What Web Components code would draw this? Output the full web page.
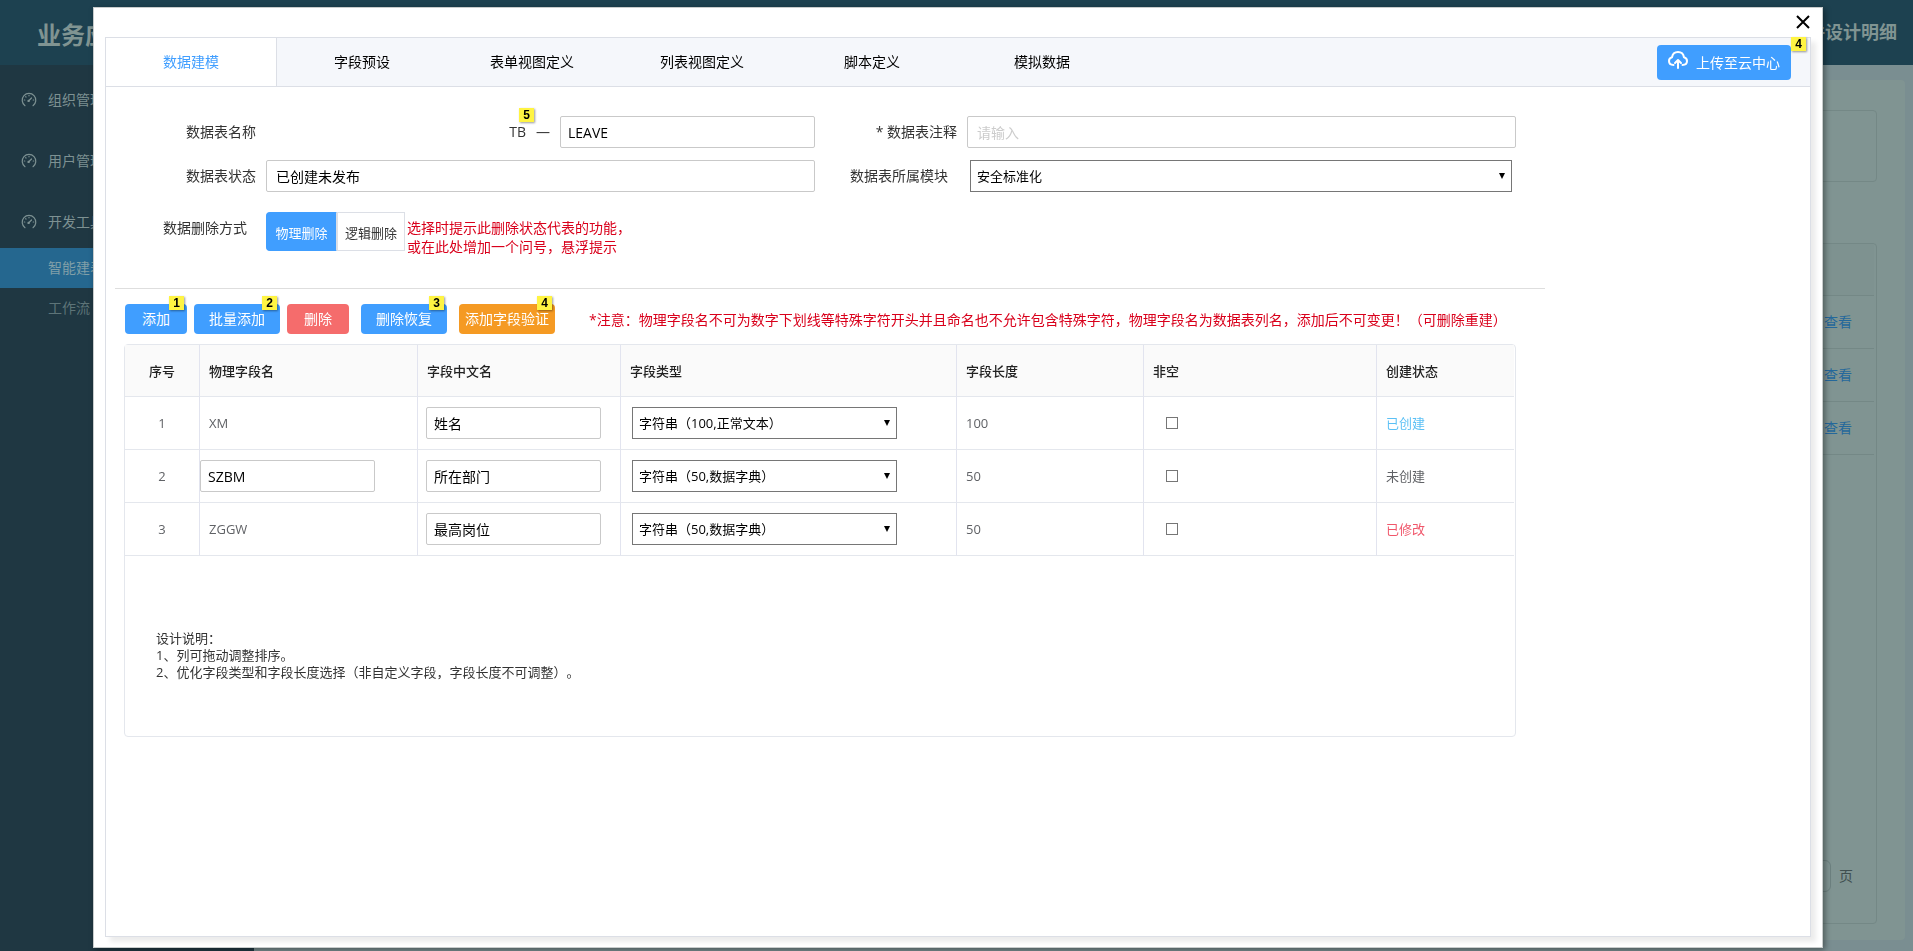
<!DOCTYPE html>
<html lang="zh-CN">
<head>
<meta charset="utf-8">
<title>数据建模</title>
<style>
  body {
    margin: 0;
    font-family: "Open Sans", "Noto Sans CJK SC", sans-serif;
    font-size: 14px;
    line-height: 20px;
    color: #333;
    --blue: #409eff;
    --line: #dcdfe6;
    --grid: #e4e7ed;
    --danger: #d9001b;
  }
</style>
</head>
<body>
<app-shell>
  <side-menu slot="side"></side-menu>
  <detail-page></detail-page>
</app-shell>

<modal-window>
  <tab-bar slot="head" tabs="数据建模,字段预设,表单视图定义,列表视图定义,脚本定义,模拟数据">
    <ui-button kind="upload" mark="4">上传至云中心</ui-button>
  </tab-bar>
  <model-form></model-form>
  <tool-bar>
    <ui-button mark="1">添加</ui-button>
    <ui-button mark="2">批量添加</ui-button>
    <ui-button kind="danger">删除</ui-button>
    <ui-button slot="extra" mark="3">删除恢复</ui-button>
    <ui-button slot="extra" kind="warn" mark="4">添加字段验证</ui-button>
    <span slot="note">*注意：物理字段名不可为数字下划线等特殊字符开头并且命名也不允许包含特殊字符，物理字段名为数据表列名，添加后不可变更！（可删除重建）</span>
  </tool-bar>
  <field-table>
    <div>设计说明：</div>
    <div>1、列可拖动调整排序。</div>
    <div>2、优化字段类型和字段长度选择（非自定义字段，字段长度不可调整）。</div>
  </field-table>
</modal-window>

<script>
const define = (name, html) => {
  customElements.define(name, class extends HTMLElement {
    constructor() {
      super();
      const t = document.createElement('template');
      t.innerHTML = typeof html === 'function' ? html(this) : html;
      this.attachShadow({ mode: 'open' }).append(t.content.cloneNode(true));
    }
  });
};

/* Shared look of text boxes and drop-downs */
const controls = `
  *, *::before, *::after { box-sizing: border-box; }
  input.text {
    height: 32px; min-width: 0; padding: 0 8px; margin: 0;
    border: 1px solid #c9c9c9; border-radius: 2px; background: #fff;
    font: inherit; font-size: 14px; color: #000; outline: none;
  }
  input.text::placeholder { color: #ccc; opacity: 1; }
  .pick { position: relative; display: inline-block; height: 32px; vertical-align: middle; }
  .pick::after {
    content: ""; position: absolute; right: 7px; top: 13px; width: 6px; height: 6px;
    background: #000; clip-path: polygon(0 0, 100% 0, 50% 100%); pointer-events: none;
  }
  select {
    appearance: none; display: block; width: 100%; height: 32px; margin: 0; padding: 0 6px;
    border: 1px solid #767676; border-radius: 0; background: #fff;
    font: inherit; font-size: 13px; color: #000;
  }`;

/* Small yellow number note pinned to a control */
define('note-mark', `
  <style>
    :host {
      position: absolute; top: -8px; right: 3px; width: 15px; height: 14px;
      background: #fff443; box-shadow: 1px 1px 2px rgba(0,0,0,.4);
      font: bold 12px/14px "Liberation Sans", sans-serif; color: #000; text-align: center;
    }
  </style><slot></slot>`);

define('ui-button', host => `
  <style>
    :host { position: relative; display: block; flex: none; }
    button {
      display: flex; align-items: center; justify-content: center;
      box-sizing: border-box; min-width: 62px; height: 30px; padding: 0 15px; border: 0; border-radius: 4px;
      background: var(--blue); color: #fff; font: inherit; font-size: 14px; white-space: nowrap;
    }
    svg { display: none; }
    :host([kind=danger]) button { background: #f56c6c; }
    :host([kind=warn]) button { background: #f59a23; padding: 0 6px; }
    :host([kind=upload]) button { height: 35px; padding: 2px 11px 0; gap: 8px; }
    :host([kind=upload]) svg { display: block; margin-top: -6px; }
    :host([kind=upload]) note-mark { right: -15px; }
  </style>
  <button type="button">
    <svg width="20" height="18" viewBox="0 0 20 18" fill="none" stroke="#fff" stroke-width="2" stroke-linecap="round" stroke-linejoin="round" aria-hidden="true">
      <path d="M5.5 14C2.800 14 1 12.300 1 10.100C1 8.100 2.300 6.700 4 6.300C4.500 3.200 6.900 1 10 1C13.100 1 15.500 3.200 16 6.300C17.700 6.700 19 8.100 19 10.100C19 12.300 17.200 14 14.500 14"/>
      <path d="M10 17V9.500M7 12L10 9L13 12"/>
    </svg>
    <span><slot></slot></span>
  </button>
  ${host.getAttribute('mark') ? `<note-mark>${host.getAttribute('mark')}</note-mark>` : ''}`);

/* Darkened application behind the window */
define('app-shell', `
  <style>
    :host {
      display: grid; min-height: 100vh;
      grid-template: 65px 1fr / 254px 1fr;
      grid-template-areas: "top top" "side main";
      background: #7a8e91; color: #809492;
    }
    header {
      grid-area: top; display: flex; justify-content: space-between; align-items: center;
      padding: 0 16px 0 37px; background: #1d4150;
    }
    .brand { font-size: 24px; font-weight: 700; line-height: 32px; padding-top: 4px; }
    .title { font-size: 18px; font-weight: 700; line-height: 24px; padding-bottom: 2px; }
    aside { grid-area: side; background: #1f3742; }
    main { grid-area: main; display: flex; padding: 15px 8px 11px 15px; }
  </style>
  <header><span class="brand">业务应用</span><span class="title">件设计明细</span></header>
  <aside><slot name="side"></slot></aside>
  <main><slot></slot></main>`);

const gauge = `<svg width="16" height="16" viewBox="0 0 16 16" fill="none" stroke="currentColor" stroke-width="1.200" stroke-linecap="round" aria-hidden="true">
  <path d="M4 13.700A6.800 6.800 0 1 1 12 13.700"/><path d="M7.500 9L10.500 6"/><circle cx="7.600" cy="8.900" r=".6"/>
  <path d="M8 3.300V3.800M3.300 8H3.800M12.200 8H12.700M4.700 4.700L5 5"/></svg>`;

define('side-menu', `
  <style>
    :host { display: block; padding-top: 9px; }
    a { display: flex; align-items: center; color: #7d9192; text-decoration: none; }
    .top { height: 52px; padding-left: 21px; gap: 11px; }
    .top + .top { margin-top: 9px; }
    .sub { height: 40px; padding-left: 48px; color: #5d7478; }
    .on { background: #25678f; color: #809fa8; }
  </style>
  <nav>
    <a class="top" href="#org">${gauge}组织管理</a>
    <a class="top" href="#user">${gauge}用户管理</a>
    <a class="top" href="#dev">${gauge}开发工具</a>
    <a class="sub on" href="#build">智能建表</a>
    <a class="sub" href="#flow">工作流</a>
  </nav>`);

define('detail-page', `
  <style>
    *, *::before { box-sizing: border-box; }
    :host {
      box-sizing: border-box; flex: 1; display: flex; flex-direction: column; gap: 61px;
      padding: 30px 28px 16px; border-radius: 4px; background: #809492;
    }
    .box { border: 1px solid #748886; border-radius: 4px; }
    .filter { height: 72px; }
    .list { flex: 1; display: flex; flex-direction: column; justify-content: space-between; padding-right: 2px; }
    table { width: 100%; border-collapse: separate; border-spacing: 0; }
    th { height: 52px; padding: 0; border-bottom: 1px solid #748886; background: #7e9290; }
    td { height: 53px; padding: 0 22px 0 0; border-bottom: 1px solid #748886; text-align: right; }
    a { color: #25689b; text-decoration: none; }
    .pager { display: flex; justify-content: flex-end; align-items: center; gap: 8px; padding: 0 21px 31px; color: #3f4f50; }
    input { width: 48px; height: 32px; border: 1px solid #6d8180; border-radius: 6px; background: none; }
  </style>
  <div class="box filter"></div>
  <div class="box list">
    <table>
      <thead><tr><th></th></tr></thead>
      <tbody>
        <tr><td><a href="#1">查看</a></td></tr>
        <tr><td><a href="#2">查看</a></td></tr>
        <tr><td><a href="#3">查看</a></td></tr>
      </tbody>
    </table>
    <div class="pager"><input aria-label="页码"><span>页</span></div>
  </div>`);

define('modal-window', `
  <style>
    *, *::before { box-sizing: border-box; }
    .window {
      position: fixed; inset: 7px 90px 3px 93px; display: flex; flex-direction: column;
      padding: 0 11px 10px; background: #fff; border: 1px solid #c8cccc;
      box-shadow: 2px 2px 6px rgba(0,0,0,.4);
    }
    .bar { display: flex; justify-content: flex-end; height: 29px; flex: none; }
    .close { width: 16px; height: 27px; padding: 0; border: 0; background: none; }
    .close svg { display: block; margin: auto; }
    .panel {
      flex: 1; border: 1px solid var(--line); background: #fff;
      box-shadow: 5px 5px 5px rgba(0,0,0,.08); min-height: 0;
    }
    .body { padding: 29px 9px 0; }
  </style>
  <section class="window" role="dialog" aria-label="数据建模">
    <div class="bar"><button class="close" type="button" aria-label="关闭">
      <svg width="14" height="14" viewBox="0 0 14 14" stroke="#000" stroke-width="2" aria-hidden="true"><path d="M1 1L13 13M13 1L1 13"/></svg>
    </button></div>
    <div class="panel">
      <slot name="head"></slot>
      <div class="body"><slot></slot></div>
    </div>
  </section>`);

define('tab-bar', host => `
  <style>
    :host {
      box-sizing: border-box; display: flex; justify-content: space-between; align-items: center;
      height: 49px; padding-right: 19px; background: #f5f7fb; border-bottom: 1px solid var(--line);
    }
    .tabs { display: flex; align-self: stretch; }
    button { box-sizing: border-box; width: 170px; height: 48px; padding: 0; border: 0; background: none; font: inherit; color: #000; }
    button[aria-selected=true] { width: 171px; background: #fff; color: var(--blue); border-right: 1px solid var(--line); }
  </style>
  <div class="tabs" role="tablist">
    ${host.getAttribute('tabs').split(',').map((t, i) => `<button type="button" role="tab" aria-selected="${i === 0}">${t}</button>`).join('')}
  </div>
  <slot></slot>`);

/* Label plus control; the label column has one width for all fields */
define('form-field', host => {
  const label = host.getAttribute('label');
  const value = host.getAttribute('value') || '';
  const kind = host.getAttribute('kind') || 'text';
  const control = kind === 'select'
    ? `<span class="pick"><select id="c"><option>${value}</option></select></span>`
    : kind === 'choice' ? `<slot></slot>`
    : `<slot></slot><input class="text" id="c" value="${value}" placeholder="${host.getAttribute('placeholder') || ''}">`;
  const tag = kind === 'choice' ? 'span' : 'label for="c"';
  return `
  <style>${controls}
    :host { display: flex; min-width: 0; }
    .label { flex: none; width: 151px; padding-right: 10px; text-align: right; line-height: 32px; }
    :host([loose]) .label { padding-right: 19px; }
    .control { flex: 1; display: flex; justify-content: flex-end; min-width: 0; }
    input.text { flex: 1; padding: 0 9px; }
    :host([short]) input.text { flex: 0 0 255px; padding: 0 7px; }
    .pick { flex: 1; margin: 0 4px 0 3px; }
    :host([kind=choice]) .control { justify-content: flex-start; }
  </style>
  <${tag} class="label">${label}</${tag.split(' ')[0]}>
  <div class="control">${control}</div>`;
});

define('radio-switch', `
  <style>
    :host { display: flex; flex: none; height: 39px; }
    input { position: absolute; opacity: 0; margin: 0; }
    label {
      box-sizing: border-box; display: flex; align-items: center; justify-content: center; width: 68px; padding-top: 2px;
      border: 1px solid var(--line); font-size: 13px;
    }
    input:checked + label { width: 71px; background: var(--blue); border-color: var(--blue); border-right-color: var(--line); border-radius: 4px 0 0 4px; color: #fff; }
  </style>
  <input type="radio" name="mode" id="hard" checked><label for="hard">物理删除</label>
  <input type="radio" name="mode" id="soft"><label for="soft">逻辑删除</label>`);

define('model-form', `
  <style>
    :host {
      display: grid; grid-template-columns: 1fr 1fr; gap: 12px 1px;
      max-width: 1401px; padding-bottom: 32px;
    }
    .prefix { position: relative; line-height: 32px; margin-right: 10px; }
    .prefix note-mark { right: -8px; }
    .dash { line-height: 32px; margin-right: 10px; }
    .last { grid-column: 1 / -1; padding-top: 8px; }
    .hint { padding: 6px 0 0 2px; line-height: 19px; color: var(--danger); }
    .hint div { white-space: nowrap; }
  </style>
  <form-field label="数据表名称" value="LEAVE" short>
    <span class="prefix">TB<note-mark>5</note-mark></span><span class="dash">—</span>
  </form-field>
  <form-field label="* 数据表注释" placeholder="请输入"></form-field>
  <form-field label="数据表状态" value="已创建未发布"></form-field>
  <form-field label="数据表所属模块" kind="select" value="安全标准化" loose></form-field>
  <form-field class="last" label="数据删除方式" kind="choice" loose>
    <radio-switch></radio-switch>
    <div class="hint"><div>选择时提示此删除状态代表的功能，</div><div>或在此处增加一个问号，悬浮提示</div></div>
  </form-field>`);

define('tool-bar', `
  <style>
    :host {
      display: flex; align-items: center; gap: 12px; max-width: 1420px;
      padding: 15px 0 10px 10px; border-top: 1px solid #dedede;
    }
    .group { display: flex; gap: 7px; }
    .note { margin-left: 22px; padding-top: 2px; color: var(--danger); white-space: nowrap; }
  </style>
  <div class="group"><slot></slot></div>
  <slot name="extra"></slot>
  <div class="note"><slot name="note"></slot></div>`);

const rows = [
  { name: 'XM', cn: '姓名', type: '字符串（100,正常文本）', len: 100, state: '已创建', cls: 'made' },
  { name: 'SZBM', edit: true, cn: '所在部门', type: '字符串（50,数据字典）', len: 50, state: '未创建', cls: '' },
  { name: 'ZGGW', cn: '最高岗位', type: '字符串（50,数据字典）', len: 50, state: '已修改', cls: 'changed' }
];

define('field-table', `
  <style>${controls}
    :host {
      box-sizing: border-box; display: block; max-width: 1392px; min-height: 393px; margin-left: 9px;
      padding-right: 1px; border: 1px solid var(--grid); border-radius: 4px;
    }
    table { width: 100%; table-layout: fixed; border-collapse: separate; border-spacing: 0; font-size: 13px; color: #606266; }
    th, td {
      padding: 0 0 0 9px; text-align: left;
      border-right: 1px solid #e2e4ef; border-bottom: 1px solid var(--grid);
    }
    th { height: 52px; background: #fafafa; color: #222; font-weight: 500; }
    td { height: 53px; }
    th:last-child, td:last-child { border-right: 0; }
    th:first-child, td:first-child { padding: 0; text-align: center; }
    td.box { padding-left: 8px; }
    td.edit { padding-left: 0; }
    input.text { width: 175px; display: block; padding: 0 7px; }
    .pick { width: 265px; margin-left: 2px; }
    input[type=checkbox] {
      appearance: none; display: block; width: 12px; height: 12px; margin: 0 0 0 13px;
      border: 1px solid #767676; background: #fff;
    }
    .made { color: #5bc0f5; }
    .changed { color: #f0566a; }
    .text-note { padding: 74px 31px 0; font-size: 13px; line-height: 17px; text-spacing-trim: space-all; }
  </style>
  <table>
    <colgroup><col style="width:75px"><col style="width:218px"><col style="width:203px"><col style="width:336px"><col style="width:187px"><col style="width:233px"><col></colgroup>
    <thead><tr><th>序号</th><th>物理字段名</th><th>字段中文名</th><th>字段类型</th><th>字段长度</th><th>非空</th><th>创建状态</th></tr></thead>
    <tbody>${rows.map((r, i) => `<tr>
      <td>${i + 1}</td>
      ${r.edit ? `<td class="edit"><input class="text" aria-label="物理字段名" value="${r.name}"></td>` : `<td>${r.name}</td>`}
      <td class="box"><input class="text" aria-label="字段中文名" value="${r.cn}"></td>
      <td><span class="pick"><select aria-label="字段类型"><option>${r.type}</option></select></span></td>
      <td>${r.len}</td>
      <td><input type="checkbox" aria-label="非空"></td>
      <td class="${r.cls}">${r.state}</td>
    </tr>`).join('')}</tbody>
  </table>
  <div class="text-note"><slot></slot></div>`);
</script>
</body>
</html>
